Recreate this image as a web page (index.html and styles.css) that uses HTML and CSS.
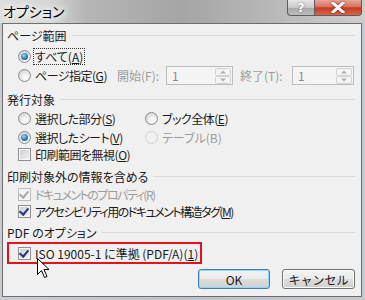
FILE: index.html
```html
<!DOCTYPE html>
<html lang="ja">
<head>
  <meta charset="UTF-8">
  <title>オプション</title>
  <link rel="stylesheet" href="styles.css">
</head>
<body>

  <div class="window">
    <div class="titlebar">
      <span class="title">オプション</span>
      <div class="caption">
        <span class="cap help">?</span>
        <span class="cap close">
          <svg width="14" height="11" viewBox="0 0 14 11">
            <path d="M2 1 L12 10 M12 1 L2 10" stroke="#fff" stroke-width="3" stroke-linecap="square"/>
          </svg>
        </span>
      </div>
    </div>

    <div class="client">
      <div class="group-head"><span>ページ範囲</span></div>
      <div class="row first">
        <div class="item w-range"><span class="radio checked"></span><span class="label focus">すべて(<u>A</u>)</span></div>
      </div>
      <div class="row">
        <div class="item w-range"><span class="radio"></span><span class="label snug">ページ指定(<u>G</u>)</span></div>
        <span class="field-label from dim">開始(F):</span>
        <span class="spin from-box">
          <span class="val">1</span>
          <svg class="arrows" width="16" height="16" viewBox="0 0 16 16">
            <rect x="0.5" y="0.5" width="15" height="7" rx="1" fill="#f4f4f4" stroke="#d2d2d2"/>
            <rect x="0.5" y="8.5" width="15" height="7" rx="1" fill="#f4f4f4" stroke="#d2d2d2"/>
            <path d="M5 5.5 L8 2.5 L11 5.5 Z" fill="#b0b0b0"/>
            <path d="M5 10.5 L8 13.5 L11 10.5 Z" fill="#b0b0b0"/>
          </svg>
        </span>
        <span class="field-label to dim">終了(T):</span>
        <span class="spin to-box">
          <span class="val">1</span>
          <svg class="arrows" width="16" height="16" viewBox="0 0 16 16">
            <rect x="0.5" y="0.5" width="15" height="7" rx="1" fill="#f4f4f4" stroke="#d2d2d2"/>
            <rect x="0.5" y="8.5" width="15" height="7" rx="1" fill="#f4f4f4" stroke="#d2d2d2"/>
            <path d="M5 5.5 L8 2.5 L11 5.5 Z" fill="#b0b0b0"/>
            <path d="M5 10.5 L8 13.5 L11 10.5 Z" fill="#b0b0b0"/>
          </svg>
        </span>
      </div>

      <div class="group-head g2"><span>発行対象</span></div>
      <div class="row">
        <div class="item w-col"><span class="radio"></span><span class="label snug">選択した部分(<u>S</u>)</span></div>
        <div class="item"><span class="radio"></span><span class="label snug">ブック全体(<u>E</u>)</span></div>
      </div>
      <div class="row">
        <div class="item w-col"><span class="radio checked"></span><span class="label snug">選択したシート(<u>V</u>)</span></div>
        <div class="item"><span class="radio disabled"></span><span class="label dim">テーブル(B)</span></div>
      </div>
      <div class="row short">
        <div class="item"><span class="check"></span><span class="label snug">印刷範囲を無視(<u>O</u>)</span></div>
      </div>

      <div class="group-head g3"><span>印刷対象外の情報を含める</span></div>
      <div class="row mid">
        <div class="item"><span class="check checked disabled"></span><span class="label tight dim">ドキュメントのプロパティ(R)</span></div>
      </div>
      <div class="row mid">
        <div class="item"><span class="check checked"></span><span class="label tight">アクセシビリティ用のドキュメント構造タグ(<u>M</u>)</span></div>
      </div>

      <div class="group-head g4"><span>PDF のオプション</span></div>
      <div class="highlight">
        <div class="item"><span class="check checked"></span><span class="label">ISO 19005-1 に準拠 (PDF/A)(<u>1</u>)</span></div>
      </div>

      <div class="buttons">
        <button class="btn default">OK</button>
        <button class="btn">キャンセル</button>
      </div>
    </div>

    <svg class="cursor" width="13" height="21" viewBox="0 0 13 21">
      <path d="M0.5 0.5 L0.5 16.5 L4.5 12.5 L7.5 19.5 L10 18.5 L7 11.5 L12 11.5 Z" fill="#fff" stroke="#000" stroke-width="1"/>
    </svg>
  </div>

</body>
</html>
```

FILE: styles.css
```css
body {
  margin: 0;
  padding: 0;
  font-family: "Noto Sans CJK JP", "Noto Sans", sans-serif;
  font-feature-settings: "palt";
  font-size: 12px;
  color: #1a1a1a;
}

.window {
  position: relative;
  width: 365px;
  height: 300px;
  background: linear-gradient(to right, #c9cdd1, #bfc3c7 50%, #c6cacd);
  overflow: hidden;
}

/* title bar */

.titlebar {
  height: 23px;
  display: flex;
  justify-content: space-between;
  background: linear-gradient(to right, #dedede 0, #d6d6d6 50px, #b6b6b6 85px, #a5a5a5 180px, #b3b3b3 250px, #c6c6c6 330px, #cdcdcd 365px);
}

.title {
  padding: 2px 0 0 3px;
  font-size: 14px;
  line-height: 18px;
  color: #000;
  text-shadow: 0 0 6px #fff, 0 0 8px #fff, 0 0 10px #fff;
}

.caption {
  display: flex;
  margin-right: 3px;
  height: 16px;
}

.cap {
  display: flex;
  align-items: center;
  justify-content: center;
  height: 15px;
  border: 1px solid #5d5d5d;
  border-top: none;
  color: #fff;
  font-family: "DejaVu Sans", sans-serif;
  font-weight: bold;
  font-size: 12px;
}

.help {
  width: 26px;
  border-right: none;
  border-radius: 0 0 0 4px;
  background: linear-gradient(#e6e6e6, #c8c8c8 50%, #a8a8a8 52%, #bdbdbd);
  text-shadow: 0 0 2px #666;
}

.close {
  width: 46px;
  border-radius: 0 0 4px 0;
  background: linear-gradient(#e8a597, #d9725f 45%, #c43c22 52%, #d9644a);
}

.close svg {
  filter: drop-shadow(0 0 1px #7a1a0a);
}

/* client area */

.client {
  margin: 0 3px 0 2px;
  height: 272px;
  border: 1px solid #6c6c6c;
  background: #f0f0f0;
  padding: 0 6px 0 4px;
}

.group-head {
  display: flex;
  align-items: center;
  height: 22px;
  color: #1a1a1a;
}

.group-head::after {
  content: "";
  flex: 1;
  margin-left: 5px;
  border-top: 1px solid #d8dadc;
}

.g2 { height: 20px; margin-top: 4px; }
.g3 { height: 20px; margin-top: 4px; }
.g4 { height: 20px; margin-top: 2px; }

.row {
  display: flex;
  align-items: center;
  height: 19px;
}

.row.first { margin-top: 1px; }
.row.short { height: 15px; }
.row.mid { height: 17px; }

.item {
  display: flex;
  align-items: center;
  margin-left: 11px;
}

.w-range { width: 99px; flex: none; }
.w-col { width: 127px; flex: none; }
.w-col + .item { margin-left: 0; }

.label {
  margin-left: 4px;
  white-space: nowrap;
  line-height: 15px;
}

.label u {
  text-underline-offset: 1px;
}

/* widths tuned to the narrow UI font of the original */
.snug { letter-spacing: -0.5px; }
.tight { letter-spacing: -1.5px; }

.dim { color: #9c9c9c; }

.focus {
  outline: 1px dotted #333;
  outline-offset: 0;
  padding: 0 1px;
  margin-left: 3px;
}

/* radio */

.radio {
  position: relative;
  width: 11px;
  height: 11px;
  border: 1px solid #8a8c8e;
  border-radius: 50%;
  background: radial-gradient(circle at 60% 65%, #f7f7f7 20%, #d4d6d9 75%);
  flex: none;
}

.radio.checked::after {
  content: "";
  position: absolute;
  left: 2px;
  top: 2px;
  width: 7px;
  height: 7px;
  border-radius: 50%;
  background: radial-gradient(circle at 40% 35%, #9fdcf3 0, #3a8cbf 45%, #123f6a 100%);
}

.radio.disabled {
  border-color: #cfd1d3;
  background: #f0f0f0;
}

/* checkbox */

.check {
  position: relative;
  width: 11px;
  height: 11px;
  border: 1px solid #8e8f8f;
  background: linear-gradient(135deg, #c9ccd1, #f4f4f4);
  box-shadow: inset 0 0 0 1px #f6f6f6;
  flex: none;
}

.check.checked::after {
  content: "";
  position: absolute;
  left: 2px;
  top: 0;
  width: 4px;
  height: 7px;
  border-right: 2px solid #24377a;
  border-bottom: 2px solid #24377a;
  transform: rotate(40deg);
}

.check.disabled {
  border-color: #bcbcbc;
  background: #f4f4f4;
}

.check.disabled::after {
  border-color: #a8a8a8;
}

/* page range fields */

.field-label {
  width: 49px;
  flex: none;
  white-space: nowrap;
}

.to { width: 52px; margin-left: 7px; }

.spin {
  display: flex;
  align-items: center;
  justify-content: space-between;
  border: 1px solid #bdbdbd;
  background: #f4f4f4;
  box-sizing: border-box;
  padding: 0 1px 0 5px;
  color: #8a8a8a;
  flex: none;
}

.from-box { width: 67px; height: 19px; }
.to-box { width: 62px; height: 19px; }

.arrows { flex: none; }

/* highlighted row */

.highlight {
  display: inline-flex;
  align-items: center;
  height: 18px;
  border: 2px solid #e8101a;
  padding-right: 2px;
}

.highlight .item { margin-left: 9px; }

/* buttons */

.buttons {
  display: flex;
  justify-content: flex-end;
  gap: 12px;
  margin-top: 5px;
}

.btn {
  width: 72px;
  height: 20px;
  padding: 0;
  font-family: inherit;
  font-size: 12px;
  color: #1a1a1a;
  border: 1px solid #707070;
  border-radius: 3px;
  background: linear-gradient(#f2f2f2, #ebebeb 48%, #dddddd 50%, #cfcfcf);
  box-shadow: inset 0 0 0 1px #fcfcfc;
}

.btn.default {
  border-color: #3c7fb1;
  box-shadow: inset 0 0 0 1px #8fd8fb;
}

.btn + .btn { width: 73px; }

.cursor {
  position: absolute;
  left: 37px;
  top: 258px;
}
```
